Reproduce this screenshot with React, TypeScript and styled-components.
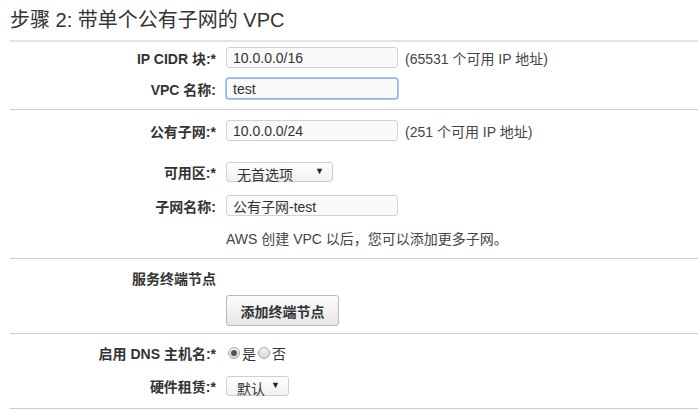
import React from "react";
import styled, { createGlobalStyle } from "styled-components";

const Global = createGlobalStyle`
  html, body { margin: 0; padding: 0; background: #fff; }
  body {
    font-family: "Liberation Sans", "Noto Sans CJK SC", sans-serif;
    font-size: 14px;
    color: #333;
  }
`;

const Page = styled.div`
  padding-left: 10px;
  width: 688px;
`;

const Title = styled.h2`
  margin: 0;
  height: 42px;
  display: flex;
  align-items: center;
  padding-bottom: 3px;
  box-sizing: border-box;
  font-size: 20px;
  font-weight: normal;
  color: #333;
  border-bottom: 2px solid #e4e4e4;
`;

const Section = styled.div<{ $pt: number; $pb: number }>`
  display: flex;
  flex-direction: column;
  padding-top: ${(p) => p.$pt}px;
  padding-bottom: ${(p) => p.$pb}px;
  border-bottom: 1px solid #cdcdcd;
`;

const Row = styled.div<{ $mt?: number; $h?: number }>`
  display: grid;
  grid-template-columns: 206px 1fr;
  column-gap: 10px;
  align-items: center;
  margin-top: ${(p) => p.$mt ?? 0}px;
  height: ${(p) => p.$h ?? 21}px;
`;

const Label = styled.div`
  text-align: right;
  font-weight: bold;
  font-size: 14px;
  color: #333;
  white-space: nowrap;
`;

const Field = styled.div`
  display: flex;
  align-items: center;
  gap: 7px;
  white-space: nowrap;
`;

const TextInput = styled.div<{ $focus?: boolean }>`
  box-sizing: border-box;
  width: 172px;
  height: 21px;
  padding: 0 6px;
  display: flex;
  align-items: center;
  border: 1px solid ${(p) => (p.$focus ? "#8fb4ec" : "#d2d2d2")};
  box-shadow: ${(p) => (p.$focus ? "0 0 0 1px #a9c7f2" : "none")};
  border-radius: 3px;
  background: #fafafa;
  color: #333;
  font-size: 14px;
`;

const Hint = styled.span`
  color: #444;
  font-size: 14px;
`;

const Select = styled.div<{ $w: number }>`
  box-sizing: border-box;
  width: ${(p) => p.$w}px;
  height: 20px;
  padding: 3px 8px 0 10px;
  display: flex;
  align-items: center;
  justify-content: space-between;
  border: 1px solid #cfcfcf;
  border-radius: 3px;
  background: linear-gradient(#ffffff, #f1f1f1);
  color: #333;
  font-size: 14px;
`;

const Arrow = styled.span`
  font-size: 9px;
  color: #222;
  margin-top: -6px;
`;

const Button = styled.button`
  box-sizing: border-box;
  width: 113px;
  height: 31px;
  padding: 0;
  border: 1px solid #b9b9b9;
  border-radius: 3px;
  background: linear-gradient(#fcfcfc, #e6e6e6);
  font-family: inherit;
  font-weight: bold;
  font-size: 14px;
  color: #333;
`;

const RadioGroup = styled.div`
  display: flex;
  align-items: center;
`;

const Radio = styled.span<{ $checked?: boolean }>`
  box-sizing: border-box;
  width: 12px;
  height: 12px;
  border-radius: 50%;
  border: 1px solid #a8a8a8;
  background: linear-gradient(#f4f4f4, #d6d6d6);
  margin: 0 2px 0 2px;
  display: inline-flex;
  align-items: center;
  justify-content: center;
  &::after {
    content: "";
    width: 6px;
    height: 6px;
    border-radius: 50%;
    background: ${(p) => (p.$checked ? "#555" : "transparent")};
  }
`;

const RadioText = styled.span`
  font-size: 14px;
  color: #333;
`;

export default function App() {
  return (
    <>
      <Global />
      <Page>
        <Title>步骤 2: 带单个公有子网的 VPC</Title>
        <Section $pt={5} $pb={10}>
          <Row>
            <Label>IP CIDR 块:*</Label>
            <Field>
              <TextInput>10.0.0.0/16</TextInput>
              <Hint>(65531 个可用 IP 地址)</Hint>
            </Field>
          </Row>
          <Row $mt={10}>
            <Label>VPC 名称:</Label>
            <Field>
              <TextInput $focus>test</TextInput>
            </Field>
          </Row>
        </Section>
        <Section $pt={10} $pb={10}>
          <Row>
            <Label>公有子网:*</Label>
            <Field>
              <TextInput>10.0.0.0/24</TextInput>
              <Hint>(251 个可用 IP 地址)</Hint>
            </Field>
          </Row>
          <Row $mt={21} $h={20}>
            <Label>可用区:*</Label>
            <Field>
              <Select $w={107}>
                <span>无首选项</span>
                <Arrow>▼</Arrow>
              </Select>
            </Field>
          </Row>
          <Row $mt={13}>
            <Label>子网名称:</Label>
            <Field>
              <TextInput>公有子网-test</TextInput>
            </Field>
          </Row>
          <Row $mt={12} $h={20}>
            <span />
            <Hint>AWS 创建 VPC 以后，您可以添加更多子网。</Hint>
          </Row>
        </Section>
        <Section $pt={9} $pb={7}>
          <Row $h={20}>
            <Label>服务终端节点</Label>
            <span />
          </Row>
          <Row $mt={7} $h={31}>
            <span />
            <Field>
              <Button>添加终端节点</Button>
            </Field>
          </Row>
        </Section>
        <Section $pt={9} $pb={12}>
          <Row $h={20}>
            <Label>启用 DNS 主机名:*</Label>
            <RadioGroup>
              <Radio $checked />
              <RadioText>是</RadioText>
              <Radio />
              <RadioText>否</RadioText>
            </RadioGroup>
          </Row>
          <Row $mt={13} $h={20}>
            <Label>硬件租赁:*</Label>
            <Field>
              <Select $w={63}>
                <span>默认</span>
                <Arrow>▼</Arrow>
              </Select>
            </Field>
          </Row>
        </Section>
      </Page>
    </>
  );
}
